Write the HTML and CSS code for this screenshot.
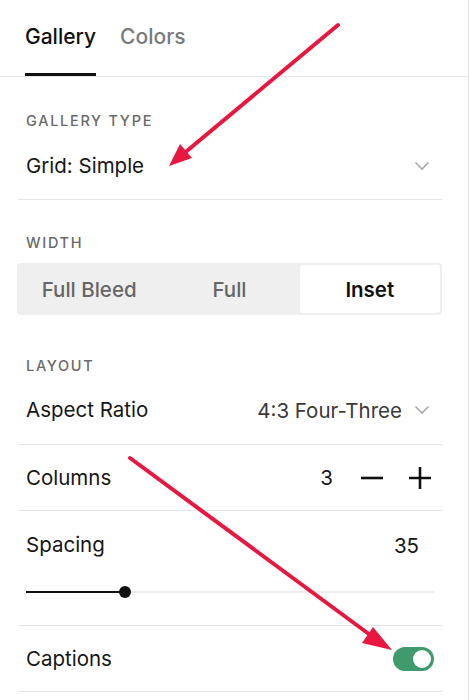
FILE: index.html
```html
<!DOCTYPE html>
<html>
<head>
<meta charset="utf-8">
<link rel="stylesheet" href="styles.css">
</head>
<body>
<div class="panel">
  <div class="tabs">
    <div class="tab active">Gallery</div>
    <div class="tab">Colors</div>
  </div>

  <div class="section-label first">GALLERY TYPE</div>
  <div class="row row-select">
    <span class="row-text">Grid: Simple</span>
    <svg class="chev" width="16" height="10" viewBox="0 0 16 10"><path d="M1.5 1.5 L8 8 L14.5 1.5" fill="none" stroke="#a8a8a8" stroke-width="1.6"/></svg>
  </div>

  <div class="section-label">WIDTH</div>
  <div class="segmented">
    <div class="seg">Full Bleed</div>
    <div class="seg">Full</div>
    <div class="seg on">Inset</div>
  </div>

  <div class="section-label layout">LAYOUT</div>
  <div class="row row-aspect">
    <span class="row-text">Aspect Ratio</span>
    <span class="right">
      <span class="value">4:3 Four-Three</span>
      <svg class="chev" width="16" height="10" viewBox="0 0 16 10"><path d="M1.5 1.5 L8 8 L14.5 1.5" fill="none" stroke="#a8a8a8" stroke-width="1.6"/></svg>
    </span>
  </div>
  <div class="row">
    <span class="row-text">Columns</span>
    <span class="right stepper">
      <span class="num">3</span>
      <svg width="22" height="22" viewBox="0 0 22 22"><path d="M0 11 H22" stroke="#111" stroke-width="2.6"/></svg>
      <svg width="22" height="22" viewBox="0 0 22 22"><path d="M0 11 H22 M11 0 V22" stroke="#111" stroke-width="2.6"/></svg>
    </span>
  </div>
  <div class="row-spacing">
    <div class="spacing-top">
      <span class="row-text">Spacing</span>
      <span class="num35">35</span>
    </div>
    <div class="slider">
      <div class="fill"></div>
      <div class="knob"></div>
    </div>
  </div>
  <div class="row">
    <span class="row-text">Captions</span>
    <span class="toggle"><span class="toggle-knob"></span></span>
  </div>

  <svg class="arrows" width="470" height="700" viewBox="0 0 470 700">
    <line x1="338" y1="25" x2="182" y2="155" stroke="#e8173f" stroke-width="4" stroke-linecap="round"/>
    <polygon points="169,166 180,144 192,158" fill="#e8173f"/>
    <line x1="130" y1="458" x2="377" y2="640" stroke="#e8173f" stroke-width="4" stroke-linecap="round"/>
    <polygon points="392,650 373,627 362,643" fill="#e8173f"/>
  </svg>
</div>
</body>
</html>
```

FILE: styles.css
```css
* { box-sizing: border-box; }
html, body { margin: 0; padding: 0; background: #fff; }
body {
  font-family: Inter, "Noto Sans", "Liberation Sans", sans-serif;
  color: #161616;
}
.panel {
  position: relative;
  width: 469px;
  height: 700px;
  border-right: 1px solid #e4e4e4;
  overflow: hidden;
}
.tabs {
  display: flex;
  gap: 24px;
  padding-left: 25px;
  border-bottom: 1px solid #e6e6e6;
  height: 77px;
}
.tab {
  font-size: 21px;
  line-height: 24px;
  font-weight: 500;
  padding: 25px 0 24px;
  color: #7a7a7a;
  border-bottom: 3px solid transparent;
}
.tab.active {
  color: #111;
  border-bottom-color: #111;
}
.section-label {
  font-size: 14.5px;
  line-height: 20px;
  font-weight: 500;
  letter-spacing: 1.7px;
  color: #6a6a6a;
  padding-left: 26px;
  margin-top: 33px;
}
.section-label.first { margin-top: 34px; }
.section-label.layout { margin-top: 41px; }
.row {
  display: flex;
  align-items: center;
  justify-content: space-between;
  margin: 0 26px 0 18px;
  padding: 0 8px 0 8px;
  height: 66px;
  border-bottom: 1px solid #e6e6e6;
}
.row-select { height: 69px; padding-top: 2px; }
.row-aspect { height: 69px; }
.row-text {
  font-size: 20.5px;
  line-height: 24px;
  color: #161616;
}
.chev { display: block; margin-right: 4px; }
.right {
  display: flex;
  align-items: center;
  gap: 12px;
}
.value {
  font-size: 20.5px;
  color: #3a3a3a;
}
.stepper { gap: 0; margin-right: 3px; }
.stepper .num {
  font-size: 20.5px;
  margin-right: 28px;
}
.stepper svg { display: block; }
.stepper svg + svg { margin-left: 26px; }
.segmented {
  display: grid;
  grid-template-columns: 1fr 1fr 1fr;
  margin: 10px 26px 0 17px;
  height: 52px;
  background: #efefef;
  border-radius: 4px;
  padding: 2px;
}
.seg {
  display: flex;
  align-items: center;
  justify-content: center;
  font-size: 20.5px;
  font-weight: 500;
  color: #666;
  border-radius: 3px;
}
.seg.on {
  background: #fff;
  color: #111;
  font-weight: 600;
}
.row-spacing {
  margin: 0 26px 0 18px;
  padding: 22px 8px 0 8px;
  height: 115px;
  border-bottom: 1px solid #e6e6e6;
}
.spacing-top {
  display: flex;
  justify-content: space-between;
  align-items: center;
  height: 24px;
}
.num35 {
  font-size: 20.5px;
  margin-right: 15px;
}
.slider {
  position: relative;
  margin-top: 34px;
  height: 2px;
  background: #ececec;
}
.fill {
  width: 99px;
  height: 2px;
  background: #111;
}
.knob {
  position: absolute;
  left: 93px;
  top: -5px;
  width: 12px;
  height: 12px;
  border-radius: 50%;
  background: #111;
}
.toggle {
  display: flex;
  align-items: center;
  justify-content: flex-end;
  width: 41px;
  height: 24px;
  border-radius: 12px;
  background: #3f9a6d;
  padding: 3px;
}
.toggle-knob {
  width: 18px;
  height: 18px;
  border-radius: 50%;
  background: #fff;
}
.arrows {
  position: absolute;
  left: 0;
  top: 0;
  pointer-events: none;
}
```
